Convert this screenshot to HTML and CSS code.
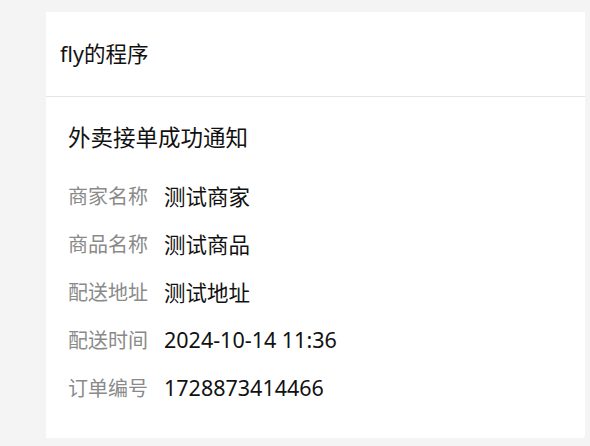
FILE: index.html
```html
<!DOCTYPE html>
<html lang="zh-CN">
<head>
  <meta charset="utf-8">
  <title>fly的程序</title>
  <link rel="stylesheet" href="styles.css">
</head>
<body>
  <div class="card">
    <div class="card-head">fly的程序</div>
    <div class="card-body">
      <div class="title">外卖接单成功通知</div>
      <div class="row"><span class="label">商家名称</span><span class="value">测试商家</span></div>
      <div class="row"><span class="label">商品名称</span><span class="value">测试商品</span></div>
      <div class="row"><span class="label">配送地址</span><span class="value">测试地址</span></div>
      <div class="row"><span class="label">配送时间</span><span class="value">2024-10-14 11:36</span></div>
      <div class="row"><span class="label">订单编号</span><span class="value">1728873414466</span></div>
    </div>
  </div>
</body>
</html>
```

FILE: styles.css
```css
html, body {
  margin: 0;
  height: 100%;
}
body {
  background: #f4f4f4;
  font-family: "Noto Sans", "Noto Sans CJK SC", sans-serif;
  color: #111;
  padding: 12px 5px 0 46px;
  box-sizing: border-box;
}

.card {
  background: #fff;
  height: 426px;
  border-radius: 0 0 3px 0;
}

.card-head {
  height: 84px;
  line-height: 84px;
  padding-left: 14px;
  font-size: 21.5px;
  border-bottom: 1px solid #e6e6e6;
}

.card-body {
  padding: 21px 22px 0;
}

.title {
  font-size: 22.5px;
  line-height: 40px;
  margin-bottom: 13px;
}

.row {
  display: flex;
  align-items: center;
  height: 48px;
}
.label {
  width: 80px;
  font-size: 20px;
  color: #8a8a8a;
  margin-right: 16px;
  white-space: nowrap;
}
.value {
  font-size: 21.5px;
  color: #111;
}
```
